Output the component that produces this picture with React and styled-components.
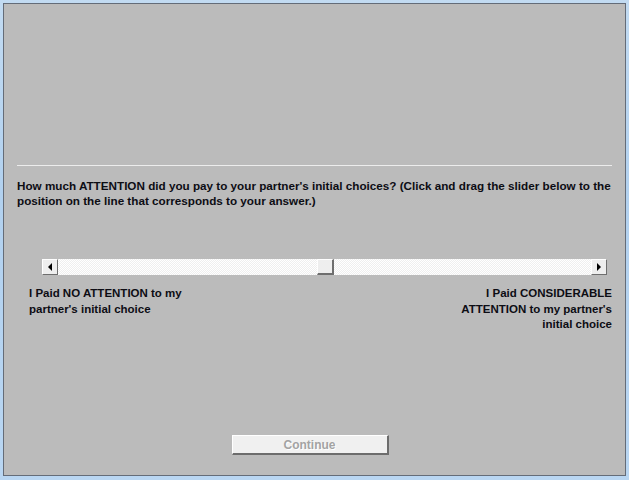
import React from "react";
import styled, { createGlobalStyle } from "styled-components";

const GlobalStyle = createGlobalStyle`
  html, body {
    margin: 0;
    padding: 0;
    background: #bcd7f0;
  }
`;

const Frame = styled.div`
  width: 629px;
  height: 480px;
  box-sizing: border-box;
  padding: 3px 3px 4px 3px;
  background: linear-gradient(180deg, #c2dbf2 0%, #b2d1ef 40%, #b9d6f2 100%);
  display: flex;
`;

const Panel = styled.div`
  flex: 1;
  display: flex;
  flex-direction: column;
  background: #bbbbbb;
  border: 1px solid #646c78;
  padding: 161px 13px 20px 13px;
  font-family: "Liberation Sans", Arial, sans-serif;
  font-weight: bold;
  font-size: 11.5px;
  color: #0d0d14;
`;

const Divider = styled.div`
  height: 1px;
  background: #ececec;
`;

const Question = styled.p`
  margin: 12px 0 0 0;
  font-size: 11.7px;
  line-height: 15px;
  white-space: nowrap;
`;

const SliderRow = styled.div`
  display: flex;
  align-items: stretch;
  height: 16px;
  margin: 51px 5px 0 25px;
`;

const ArrowButton = styled.div`
  width: 16px;
  box-sizing: border-box;
  background: #eeeeee;
  border-top: 1px solid #ffffff;
  border-left: 1px solid #ffffff;
  border-right: 1px solid #6e6e6e;
  border-bottom: 1px solid #6e6e6e;
  display: flex;
  align-items: center;
  justify-content: center;
  &::after {
    content: "";
    width: 0;
    height: 0;
    border-top: 4px solid transparent;
    border-bottom: 4px solid transparent;
    ${(p) =>
      p.$dir === "left"
        ? "border-right: 4px solid #000;"
        : "border-left: 4px solid #000;"}
  }
`;

const Track = styled.div`
  flex: 1;
  display: flex;
  background: repeating-conic-gradient(#ffffff 0 25%, #efefef 0 50%) 0 0 / 2px 2px;
`;

const TrackFill = styled.div`
  flex: ${(p) => p.$grow};
`;

const Thumb = styled.div`
  width: 17px;
  box-sizing: border-box;
  background: #eeeeee;
  border-top: 1px solid #ffffff;
  border-left: 1px solid #ffffff;
  border-right: 2px solid #6e6e6e;
  border-bottom: 2px solid #6e6e6e;
`;

const Labels = styled.div`
  display: flex;
  justify-content: space-between;
  margin: 11px 0 0 12px;
  line-height: 15.5px;
`;

const Label = styled.div`
  text-align: ${(p) => p.$align};
`;

const Footer = styled.div`
  margin-top: auto;
  display: flex;
  justify-content: center;
  padding-right: 9px;
`;

const Button = styled.button`
  width: 157px;
  height: 20px;
  box-sizing: border-box;
  padding: 0;
  background: #f0f0f0;
  border-top: 1px solid #ffffff;
  border-left: 1px solid #ffffff;
  border-right: 2px solid #6c6c6c;
  border-bottom: 2px solid #6c6c6c;
  font-family: "Liberation Sans", Arial, sans-serif;
  font-weight: bold;
  font-size: 12px;
  color: #a3a3a3;
  text-shadow: 1px 1px 0 #ffffff;
  cursor: default;
`;

export default function App() {
  return (
    <>
      <GlobalStyle />
      <Frame>
        <Panel>
          <Divider />
          <Question>
            How much ATTENTION did you pay to your partner's initial choices? (Click and drag the slider below to the
            <br />
            position on the line that corresponds to your answer.)
          </Question>
          <SliderRow>
            <ArrowButton $dir="left" />
            <Track>
              <TrackFill $grow={258} />
              <Thumb />
              <TrackFill $grow={257} />
            </Track>
            <ArrowButton $dir="right" />
          </SliderRow>
          <Labels>
            <Label $align="left">
              I Paid NO ATTENTION to my
              <br />
              partner's initial choice
            </Label>
            <Label $align="right">
              I Paid CONSIDERABLE
              <br />
              ATTENTION to my partner's
              <br />
              initial choice
            </Label>
          </Labels>
          <Footer>
            <Button disabled>Continue</Button>
          </Footer>
        </Panel>
      </Frame>
    </>
  );
}
